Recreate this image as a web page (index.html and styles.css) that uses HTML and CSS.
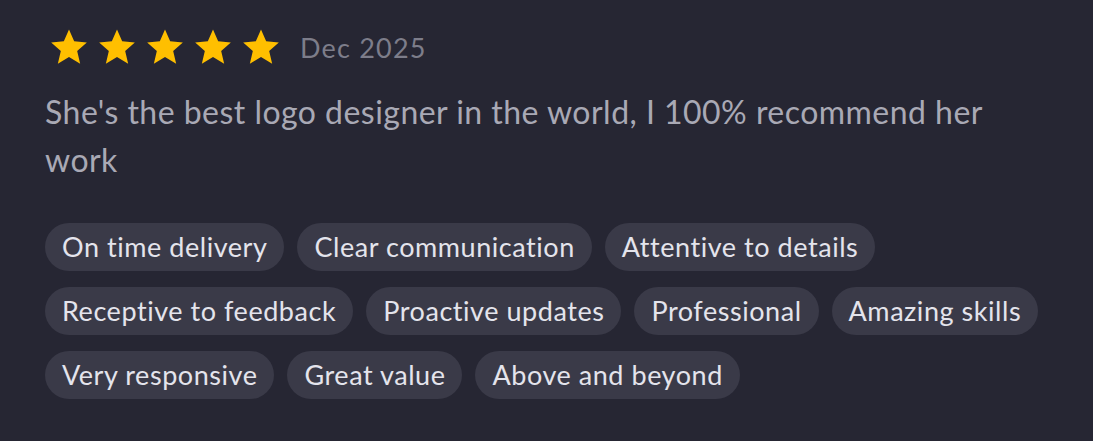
FILE: index.html
```html
<!DOCTYPE html>
<html lang="en">
<head>
<meta charset="utf-8">
<link rel="stylesheet" href="styles.css">
</head>
<body>
<div class="review">
  <div class="head">
    <div class="stars">
      <svg class="star" viewBox="0 0 24 24"><path d="M12 1.5l3.1 7.1 7.6.7-5.8 5.1 1.8 7.6L12 18l-6.7 4 1.8-7.6-5.8-5.1 7.6-.7z"/></svg>
      <svg class="star" viewBox="0 0 24 24"><path d="M12 1.5l3.1 7.1 7.6.7-5.8 5.1 1.8 7.6L12 18l-6.7 4 1.8-7.6-5.8-5.1 7.6-.7z"/></svg>
      <svg class="star" viewBox="0 0 24 24"><path d="M12 1.5l3.1 7.1 7.6.7-5.8 5.1 1.8 7.6L12 18l-6.7 4 1.8-7.6-5.8-5.1 7.6-.7z"/></svg>
      <svg class="star" viewBox="0 0 24 24"><path d="M12 1.5l3.1 7.1 7.6.7-5.8 5.1 1.8 7.6L12 18l-6.7 4 1.8-7.6-5.8-5.1 7.6-.7z"/></svg>
      <svg class="star" viewBox="0 0 24 24"><path d="M12 1.5l3.1 7.1 7.6.7-5.8 5.1 1.8 7.6L12 18l-6.7 4 1.8-7.6-5.8-5.1 7.6-.7z"/></svg>
    </div>
    <span class="date">Dec 2025</span>
  </div>
  <p class="text">She's the best logo designer in the world, I 100% recommend her work</p>
  <div class="tags">
    <span class="tag">On time delivery</span>
    <span class="tag">Clear communication</span>
    <span class="tag">Attentive to details</span>
    <span class="tag">Receptive to feedback</span>
    <span class="tag">Proactive updates</span>
    <span class="tag">Professional</span>
    <span class="tag">Amazing skills</span>
    <span class="tag">Very responsive</span>
    <span class="tag">Great value</span>
    <span class="tag">Above and beyond</span>
  </div>
</div>
</body>
</html>
```
FILE: styles.css
```css
html, body {
  margin: 0;
  padding: 0;
  background: #262633;
}
body {
  font-family: "Lato", "Noto Sans", sans-serif;
}
.review {
  padding: 26px 45px 0 45px;
  width: 1003px;
}
.head {
  display: flex;
  align-items: center;
  gap: 19px;
  height: 42px;
}
.stars {
  display: flex;
  gap: 8px;
  padding-left: 4px;
}
.star {
  width: 40px;
  height: 40px;
  fill: #ffbf00;
}
.date {
  font-size: 27px;
  letter-spacing: 1.2px;
  color: #7d7d8a;
}
.text {
  margin: 20px 0 0 0;
  font-size: 32px;
  letter-spacing: 0.47px;
  line-height: 48px;
  color: #a9a9b5;
}
.tags {
  display: flex;
  flex-wrap: wrap;
  gap: 16px 13px;
  margin-top: 39px;
}
.tag {
  display: inline-block;
  height: 48px;
  line-height: 48px;
  padding: 0 17px;
  border-radius: 24px;
  background: #3a3a48;
  color: #e4e4ec;
  font-size: 27px;
  letter-spacing: 0.55px;
}
```
